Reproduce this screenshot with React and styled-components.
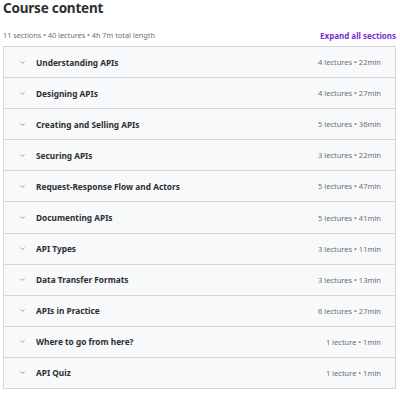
import React from "react";
import styled, { createGlobalStyle } from "styled-components";

const Global = createGlobalStyle`
  html, body { margin: 0; padding: 0; background: #fff; }
  body { font-family: "Noto Sans", "Liberation Sans", sans-serif; color: #2d2f31; }
`;

const Page = styled.div`
  width: 400px;
  padding: 0 4px 0 3px;
  box-sizing: border-box;
`;

const Title = styled.h2`
  margin: 0;
  font-size: 13.5px;
  line-height: 17px;
  font-weight: 700;
  letter-spacing: -0.2px;
`;

const MetaBar = styled.div`
  display: flex;
  justify-content: space-between;
  align-items: center;
  margin-top: 11px;
  height: 14px;
  margin-bottom: 4px;
`;

const Meta = styled.span`
  font-size: 7.3px;
  color: #6a6f73;
`;

const Expand = styled.button`
  border: 0;
  background: none;
  padding: 0;
  font-family: inherit;
  font-size: 8px;
  font-weight: 700;
  color: #7b2fd0;
  cursor: pointer;
`;

const Panel = styled.div`
  border: 1px solid #d1d7dc;
  border-top-width: 0;
`;

const Row = styled.div`
  display: flex;
  align-items: center;
  height: 30.1px;
  border-top: 1px solid #d1d7dc;
  background: #f7f9fa;
  padding: 0 14px 0 15px;
`;

const Chevron = styled.svg`
  width: 7px;
  height: 7px;
  flex: none;
  margin-right: 10px;
`;

const SectionTitle = styled.span`
  flex: 1;
  font-size: 8.3px;
  font-weight: 700;
  color: #2d2f31;
`;

const SectionMeta = styled.span`
  font-size: 7.5px;
  color: #6a6f73;
`;

const sections = [
  ["Understanding APIs", "4 lectures • 22min"],
  ["Designing APIs", "4 lectures • 27min"],
  ["Creating and Selling APIs", "5 lectures • 36min"],
  ["Securing APIs", "3 lectures • 22min"],
  ["Request-Response Flow and Actors", "5 lectures • 47min"],
  ["Documenting APIs", "5 lectures • 41min"],
  ["API Types", "3 lectures • 11min"],
  ["Data Transfer Formats", "3 lectures • 13min"],
  ["APIs in Practice", "6 lectures • 27min"],
  ["Where to go from here?", "1 lecture • 1min"],
  ["API Quiz", "1 lecture • 1min"],
];

export default function App() {
  return (
    <Page>
      <Global />
      <Title>Course content</Title>
      <MetaBar>
        <Meta>11 sections • 40 lectures • 4h 7m total length</Meta>
        <Expand>Expand all sections</Expand>
      </MetaBar>
      <Panel>
        {sections.map(([t, m]) => (
          <Row key={t}>
            <Chevron viewBox="0 0 10 10">
              <path d="M2.5 4 L5 6.5 L7.5 4" fill="none" stroke="#8a8f93" strokeWidth="1.2" strokeLinecap="round" strokeLinejoin="round" />
            </Chevron>
            <SectionTitle>{t}</SectionTitle>
            <SectionMeta>{m}</SectionMeta>
          </Row>
        ))}
      </Panel>
    </Page>
  );
}
